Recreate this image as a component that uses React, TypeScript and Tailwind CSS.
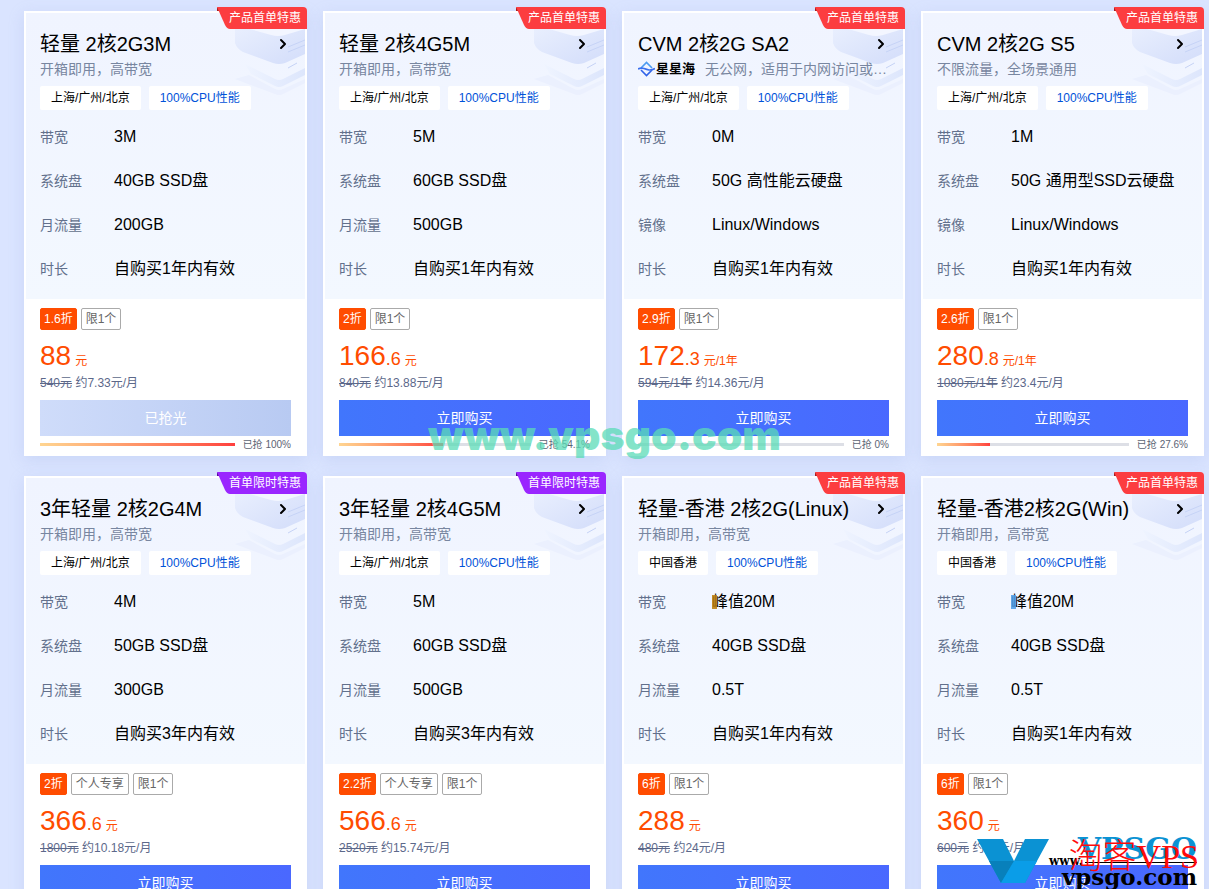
import React from "react";
import { ChevronRight } from "lucide-react";

type Plan = {
  title: string;
  desc: string;
  star?: boolean;
  region: string;
  ribbon: string;
  limited?: boolean;
  mark?: "amber" | "blue";
  specs: [string, string][];
  tags: string[];
  price: string;
  cents?: string;
  unit: string;
  oldPrice: string;
  monthly: string;
  sold: number;
  soldOut?: boolean;
};

const BASIC = "开箱即用，高带宽";
const CITIES = "上海/广州/北京";

const lightSpecs = (bandwidth: string, disk: string, traffic: string, years: number): [string, string][] => [
  ["带宽", bandwidth],
  ["系统盘", disk],
  ["月流量", traffic],
  ["时长", `自购买${years}年内有效`],
];

const cvmSpecs = (bandwidth: string, disk: string): [string, string][] => [
  ["带宽", bandwidth],
  ["系统盘", disk],
  ["镜像", "Linux/Windows"],
  ["时长", "自购买1年内有效"],
];

const plans: Plan[] = [
  { title: "轻量 2核2G3M", desc: BASIC, region: CITIES, ribbon: "产品首单特惠", specs: lightSpecs("3M", "40GB SSD盘", "200GB", 1), tags: ["1.6折", "限1个"], price: "88", unit: "元", oldPrice: "540元", monthly: "约7.33元/月", sold: 100, soldOut: true },
  { title: "轻量 2核4G5M", desc: BASIC, region: CITIES, ribbon: "产品首单特惠", specs: lightSpecs("5M", "60GB SSD盘", "500GB", 1), tags: ["2折", "限1个"], price: "166", cents: ".6", unit: "元", oldPrice: "840元", monthly: "约13.88元/月", sold: 54.1 },
  { title: "CVM 2核2G SA2", desc: "无公网，适用于内网访问或有公网需求的业务", star: true, region: CITIES, ribbon: "产品首单特惠", specs: cvmSpecs("0M", "50G 高性能云硬盘"), tags: ["2.9折", "限1个"], price: "172", cents: ".3", unit: "元/1年", oldPrice: "594元/1年", monthly: "约14.36元/月", sold: 0 },
  { title: "CVM 2核2G S5", desc: "不限流量，全场景通用", region: CITIES, ribbon: "产品首单特惠", specs: cvmSpecs("1M", "50G 通用型SSD云硬盘"), tags: ["2.6折", "限1个"], price: "280", cents: ".8", unit: "元/1年", oldPrice: "1080元/1年", monthly: "约23.4元/月", sold: 27.6 },
  { title: "3年轻量 2核2G4M", desc: BASIC, region: CITIES, ribbon: "首单限时特惠", limited: true, specs: lightSpecs("4M", "50GB SSD盘", "300GB", 3), tags: ["2折", "个人专享", "限1个"], price: "366", cents: ".6", unit: "元", oldPrice: "1800元", monthly: "约10.18元/月", sold: 60 },
  { title: "3年轻量 2核4G5M", desc: BASIC, region: CITIES, ribbon: "首单限时特惠", limited: true, specs: lightSpecs("5M", "60GB SSD盘", "500GB", 3), tags: ["2.2折", "个人专享", "限1个"], price: "566", cents: ".6", unit: "元", oldPrice: "2520元", monthly: "约15.74元/月", sold: 60 },
  { title: "轻量-香港 2核2G(Linux)", desc: BASIC, region: "中国香港", ribbon: "产品首单特惠", mark: "amber", specs: lightSpecs("峰值20M", "40GB SSD盘", "0.5T", 1), tags: ["6折", "限1个"], price: "288", unit: "元", oldPrice: "480元", monthly: "约24元/月", sold: 50 },
  { title: "轻量-香港2核2G(Win)", desc: BASIC, region: "中国香港", ribbon: "产品首单特惠", mark: "blue", specs: lightSpecs("峰值20M", "40GB SSD盘", "0.5T", 1), tags: ["6折", "限1个"], price: "360", unit: "元", oldPrice: "600元", monthly: "约30元/月", sold: 50 },
];

function ServerArt() {
  return (
    <svg className="absolute top-0 right-0" width="90" height="92" viewBox="0 0 90 92" fill="none" aria-hidden="true">
      <defs>
        <linearGradient id="slab" x1="0" y1="0" x2="1" y2="1">
          <stop offset="0" stopColor="#e9effe" />
          <stop offset="1" stopColor="#d3ddfa" />
        </linearGradient>
        <linearGradient id="tray" x1="0" y1="0" x2="1" y2="0">
          <stop offset="0" stopColor="#eff4ff" />
          <stop offset="1" stopColor="#dde6fc" />
        </linearGradient>
      </defs>
      <path d="M20 66 34 62 60 76Q64 78 68 76L90 66V70L68 81Q64 83 60 81Z" fill="#ebf0fe" />
      <path d="M30 51 60 66Q64 68 68 66L90 55V62L68 73Q64 75 60 73L36 61Z" fill="url(#tray)" />
      <path d="M20 14V30Q22 36 28 39L58 50Q64 52 70 50L90 41V14Z" fill="url(#slab)" />
      <path d="M28 14 56 22Q63 24 70 22L90 16V12H28Z" fill="#f3f6ff" />
      <path d="M73 34 90 27M73 39 90 32M73 55 82 50" stroke="#c6d3f6" strokeWidth="1" />
    </svg>
  );
}

function StarSea() {
  return (
    <span className="flex shrink-0 items-center gap-px text-[13px] font-bold text-black">
      <svg width="17" height="16" viewBox="0 0 17 16" fill="none" strokeWidth="1.6" aria-hidden="true">
        <path d="M3 7 8.500 1.500 14 7" stroke="#4b9bf2" />
        <path d="M3 9 8.500 14.500 14 9" stroke="#2f62e8" />
        <path d="M0 8Q3 6.500 6 7.500T11 9Q14 9.200 17 7.500" stroke="#3a6fee" />
      </svg>
      星星海
    </span>
  );
}

function Ribbon({ text, limited }: { text: string; limited?: boolean }) {
  return (
    <div className="absolute -top-1.5 -right-0.5 h-[22px] w-[90px]">
      <svg className="absolute inset-0" width="90" height="22" viewBox="0 0 90 22" aria-hidden="true">
        <path d="M0 0V4H4Z" fill={limited ? "#5b1399" : "#a51e1e"} />
        <path d="M0 0H86Q90 0 90 4V22H13Q10 22 8 18Z" fill={limited ? "#9a26ff" : "#fc3d40"} />
      </svg>
      <span className="relative block pr-1.5 text-right text-xs leading-[22px] whitespace-nowrap text-white">{text}</span>
    </div>
  );
}

function PlanCard({ plan }: { plan: Plan }) {
  return (
    <article className="relative min-w-0 border-2 border-white bg-white shadow-[0_4px_14px_rgba(150,170,225,0.25)]">
      <div className="relative bg-linear-to-b from-[#f0f4ff] to-[#f3f8ff] px-3.5 pt-[18px] pb-2">
        <ServerArt />
        <div className="relative flex h-[26px] items-center justify-between">
          <h2 className="text-xl leading-[26px] whitespace-nowrap text-black">{plan.title}</h2>
          <a href="#" aria-label={plan.title} className="text-black">
            <ChevronRight size={16} strokeWidth={3} />
          </a>
        </div>
        <p className="relative flex h-6 items-center gap-2.5 text-sm text-[#7886a0]">
          {plan.star && <StarSea />}
          <span className="truncate">{plan.desc}</span>
        </p>
        <div className="relative mt-[5px] flex gap-2 text-xs leading-6">
          <span className="rounded-xs bg-white px-[11px] text-black">{plan.region}</span>
          <span className="rounded-xs bg-white px-[11px] text-[#0052d9]">100%CPU性能</span>
        </div>
        <dl className="mt-[5px]">
          {plan.specs.map(([name, value], i) => (
            <div key={name} className="flex h-11 items-center">
              <dt className="w-[74px] shrink-0 text-sm text-[#62708c]">{name}</dt>
              <dd className="relative text-base whitespace-nowrap text-black">
                {value}
                {i === 0 && plan.mark && (
                  <i className={`absolute top-[5px] left-0 h-3.5 w-[5px] ${plan.mark === "amber" ? "bg-[#b87a08]/85" : "bg-[#4a9be8]/85"}`} />
                )}
              </dd>
            </div>
          ))}
        </dl>
      </div>
      <Ribbon text={plan.ribbon} limited={plan.limited} />

      <div className="px-3.5 pt-[9px] pb-0.5">
        <div className="flex gap-1 text-xs leading-5">
          {plan.tags.map((tag, i) => (
            <span
              key={tag}
              className={`rounded-xs border ${i === 0 ? "border-[#ff4c00] bg-[#ff4c00] px-[3px] text-white" : "border-[#aaaaaa] px-1 text-[#666666]"}`}
            >
              {tag}
            </span>
          ))}
        </div>
        <p className="mt-[9px] h-[34px] text-[28px] leading-[34px] text-[#ff4c00]">
          {plan.price}
          {plan.cents && <span className="text-lg">{plan.cents}</span>}
          <span className="ml-1 text-xs">{plan.unit}</span>
        </p>
        <p className="h-5 text-xs leading-5 text-[#5c688a]">
          <del>{plan.oldPrice}</del> {plan.monthly}
        </p>
        <button
          type="button"
          disabled={plan.soldOut}
          className={`mt-[7px] block h-9 w-full text-sm text-white ${plan.soldOut ? "bg-linear-to-r from-[#cfdcfa] to-[#b8caf2]" : "bg-linear-to-r from-[#4176fc] to-[#4a68ff]"}`}
        >
          {plan.soldOut ? "已抢光" : "立即购买"}
        </button>
        <div className="flex h-4 items-center gap-2 text-[10px] text-[#5c6474]">
          <div className="h-[3px] flex-1 bg-[#dddfe6]">
            <div className="h-full bg-linear-to-r from-[#ffd591] to-[#ff3e3e]" style={{ width: `${plan.sold}%` }} />
          </div>
          <span className="whitespace-nowrap">已抢 {plan.sold}%</span>
        </div>
      </div>
    </article>
  );
}

function SiteLogo() {
  return (
    <div className="pointer-events-none absolute right-2 bottom-0 h-[52px] w-[226px] whitespace-nowrap">
      <svg className="absolute top-0 left-0" width="76" height="48" viewBox="0 0 76 48" aria-hidden="true">
        <path d="M2 2H28L39 24 50 2H74L50 46H26Z" fill="#0b92d3" />
        <path d="M14 24H39L26 46Z" fill="#0880bb" />
        <path d="M39 24H62L50 46H26Z" fill="#0a9de8" />
      </svg>
      <span className="absolute -top-1 right-1 font-['DejaVu_Serif',serif] text-3xl leading-8 font-bold text-[#0b92d3]">VPSGO</span>
      <span className="absolute top-4 left-[74px] font-['DejaVu_Serif',serif] text-xs font-bold text-black">www.</span>
      <i className="absolute top-[25px] right-1 h-px w-[112px] bg-black" />
      <span className="absolute right-1 bottom-0 font-['DejaVu_Serif',serif] text-[23px] leading-6 font-bold text-black">vpsgo.com</span>
      <span className="absolute top-0 right-0.5 font-['Liberation_Serif','Noto_Sans_CJK_SC',serif] text-[34px] leading-10 font-light text-[#ff0a0a]">淘客VPS</span>
    </div>
  );
}

export default function App() {
  return (
    <main className="relative h-screen overflow-hidden bg-[#dae4ff] pt-[11px] pr-[5px] pl-6 font-['Liberation_Sans','Noto_Sans_CJK_SC',sans-serif]">
      <div className="grid grid-cols-4 gap-x-4 gap-y-5">
        {plans.map((plan) => (
          <PlanCard key={plan.title} plan={plan} />
        ))}
      </div>
      <div className="pointer-events-none absolute inset-x-0 top-[413px] text-center font-['Inter',sans-serif] text-[41px] leading-[44px] font-black text-[#5bdcb7]/75">
        www.vpsgo.com
      </div>
      <SiteLogo />
    </main>
  );
}
